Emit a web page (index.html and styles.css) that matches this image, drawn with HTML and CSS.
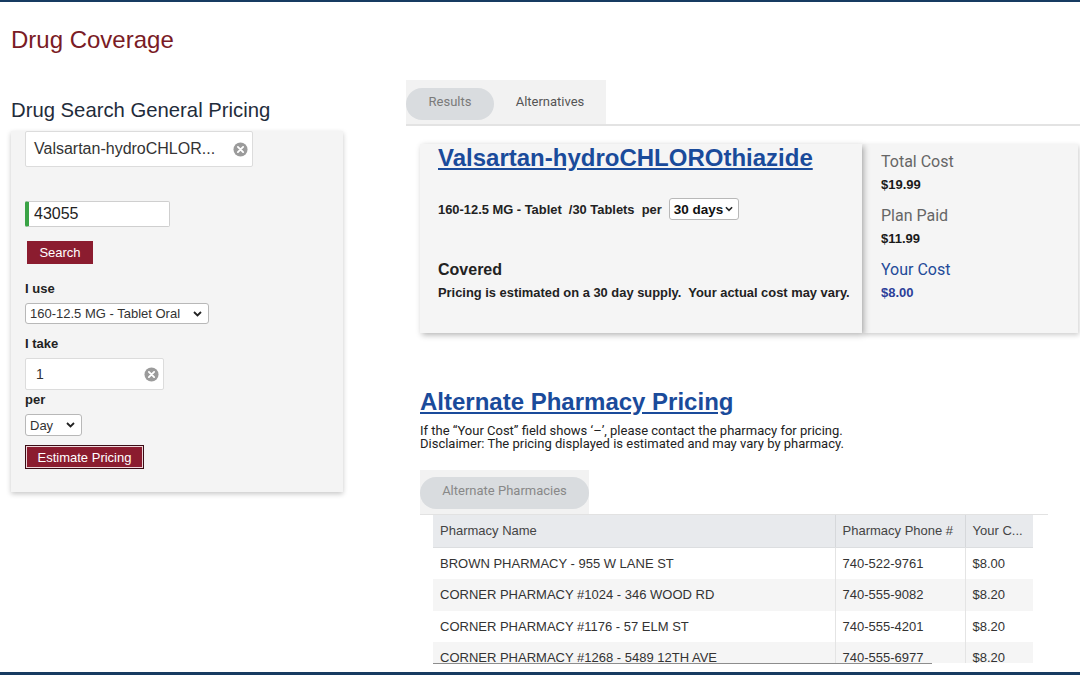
FILE: index.html
```html
<!DOCTYPE html>
<html>
<head>
<meta charset="utf-8">
<title>Drug Coverage</title>
<link rel="stylesheet" href="styles.css">
</head>
<body>
<div class="frame">
  <h1 class="page-title">Drug Coverage</h1>
  <div class="columns">
    <section class="left">
      <h2 class="search-title">Drug Search General Pricing</h2>
      <div class="search-card">
        <div class="field field-drug">
          <span>Valsartan-hydroCHLOR...</span>
          <svg class="clear" width="15" height="15" viewBox="0 0 16 16"><circle cx="8" cy="8" r="7.5" fill="#9b9b9b"/><path d="M5.2 5.2l5.6 5.6M10.8 5.2l-5.6 5.6" stroke="#fff" stroke-width="2" stroke-linecap="round"/></svg>
        </div>
        <div class="field field-zip"><span>43055</span></div>
        <button class="btn btn-search">Search</button>
        <div class="label label-use">I use</div>
        <div class="select select-use">
          <span>160-12.5 MG - Tablet Oral</span>
          <svg width="9" height="6" viewBox="0 0 9 6"><path d="M1 1l3.5 3.5L8 1" fill="none" stroke="#222" stroke-width="1.8"/></svg>
        </div>
        <div class="label label-take">I take</div>
        <div class="field field-qty">
          <span>1</span>
          <svg class="clear" width="15" height="15" viewBox="0 0 16 16"><circle cx="8" cy="8" r="7.5" fill="#9b9b9b"/><path d="M5.2 5.2l5.6 5.6M10.8 5.2l-5.6 5.6" stroke="#fff" stroke-width="2" stroke-linecap="round"/></svg>
        </div>
        <div class="label label-per">per</div>
        <div class="select select-per">
          <span>Day</span>
          <svg width="9" height="6" viewBox="0 0 9 6"><path d="M1 1l3.5 3.5L8 1" fill="none" stroke="#222" stroke-width="1.8"/></svg>
        </div>
        <button class="btn btn-estimate">Estimate Pricing</button>
      </div>
    </section>

    <section class="right">
      <div class="tabs">
        <div class="tab tab-results">Results</div>
        <div class="tab tab-alternatives">Alternatives</div>
      </div>
      <div class="tabs-rule"></div>

      <div class="result-row">
        <div class="drug-card">
          <a class="drug-name">Valsartan-hydroCHLOROthiazide</a>
          <div class="dose-row">
            <span>160-12.5 MG - Tablet&nbsp; /30 Tablets&nbsp; per</span>
            <div class="select select-days">
              <span>30 days</span>
              <svg width="8" height="6" viewBox="0 0 9 6"><path d="M1 1l3.5 3.5L8 1" fill="none" stroke="#222" stroke-width="1.8"/></svg>
            </div>
          </div>
          <div class="covered">Covered</div>
          <div class="note">Pricing is estimated on a 30 day supply.&nbsp; Your actual cost may vary.</div>
        </div>
        <div class="cost-card">
          <div class="cost-item">
            <div class="cost-label">Total Cost</div>
            <div class="cost-value">$19.99</div>
          </div>
          <div class="cost-item">
            <div class="cost-label">Plan Paid</div>
            <div class="cost-value">$11.99</div>
          </div>
          <div class="cost-item cost-yours">
            <div class="cost-label">Your Cost</div>
            <div class="cost-value">$8.00</div>
          </div>
        </div>
      </div>

      <h3 class="alt-title"><a>Alternate Pharmacy Pricing</a></h3>
      <p class="disclaimer">If the “Your Cost” field shows ‘–’, please contact the pharmacy for pricing.<br>Disclaimer: The pricing displayed is estimated and may vary by pharmacy.</p>

      <div class="tabs tabs-alt">
        <div class="tab tab-alt-pharm">Alternate Pharmacies</div>
      </div>
      <div class="alt-rule"></div>

      <div class="table-scroll">
        <table class="pharm-table">
          <colgroup><col class="c-name"><col class="c-phone"><col class="c-cost"></colgroup>
          <thead>
            <tr><th>Pharmacy Name</th><th>Pharmacy Phone #</th><th>Your C...</th></tr>
          </thead>
          <tbody>
            <tr><td>BROWN PHARMACY - 955 W LANE ST</td><td>740-522-9761</td><td>$8.00</td></tr>
            <tr><td>CORNER PHARMACY #1024 - 346 WOOD RD</td><td>740-555-9082</td><td>$8.20</td></tr>
            <tr><td>CORNER PHARMACY #1176 - 57 ELM ST</td><td>740-555-4201</td><td>$8.20</td></tr>
            <tr><td>CORNER PHARMACY #1268 - 5489 12TH AVE</td><td>740-555-6977</td><td>$8.20</td></tr>
          </tbody>
        </table>
      </div>
      <div class="scroll-thumb"></div>
    </section>
  </div>
</div>
</body>
</html>
```

FILE: styles.css
```css
html, body {
  margin: 0;
  padding: 0;
  background: #fff;
}

.frame {
  width: 1080px;
  height: 675px;
  box-sizing: border-box;
  border-top: 2px solid #173b61;
  border-bottom: 3px solid #173b61;
  overflow: hidden;
  font-family: "Liberation Sans", Arial, sans-serif;
  color: #222;
}

.page-title {
  margin: 24px 0 0 11px;
  font-size: 24px;
  line-height: 28px;
  font-weight: normal;
  color: #7a1b25;
}

.columns {
  display: flex;
  padding-left: 11px;
  gap: 63px;
}

/* ---------- left column ---------- */
.left {
  width: 332px;
  flex: none;
}

.search-title {
  margin: 44px 0 0;
  font-size: 20.3px;
  line-height: 24px;
  font-weight: normal;
  color: #1f2c3b;
}

.search-card {
  margin-top: 9px;
  background: #f4f4f4;
  box-shadow: 0 2px 5px rgba(0, 0, 0, 0.22);
  padding: 0 14px 23px;
}

.field {
  box-sizing: border-box;
  background: #fff;
  border: 1px solid #dcdcdc;
  border-radius: 2px;
  display: flex;
  align-items: center;
  justify-content: space-between;
  color: #333;
}

.field-drug {
  width: 228px;
  height: 36px;
  padding: 0 4px 0 8px;
  font-size: 16px;
}

.field-zip {
  margin-top: 34px;
  width: 145px;
  height: 26px;
  border-color: #cfcfcf;
  border-left: 4px solid #3aa346;
  padding-left: 5px;
  font-size: 16px;
  color: #222;
}

.field-qty {
  margin-top: 6px;
  width: 139px;
  height: 32px;
  padding: 0 4px 0 10px;
  font-size: 14px;
}

.clear {
  flex: none;
  display: block;
}

.btn {
  display: block;
  border: none;
  padding: 0;
  font-family: "Liberation Sans", Arial, sans-serif;
  font-size: 13px;
  color: #fff;
  background: #8b1c2f;
}

.btn-search {
  margin: 14px 0 0 2px;
  width: 66px;
  height: 23px;
}

.btn-estimate {
  margin-top: 9px;
  width: 119px;
  height: 24px;
  border: 1px solid #3a0d16;
  box-shadow: inset 0 0 0 1px #efd6da;
}

.label {
  font-size: 13px;
  line-height: 16px;
  font-weight: bold;
  color: #222;
}

.label-use { margin-top: 17px; }
.label-take { margin-top: 12px; }
.label-per { margin-top: 2px; }

.select {
  box-sizing: border-box;
  display: flex;
  align-items: center;
  justify-content: space-between;
  background: #fff;
  border: 1px solid #b8b8b8;
  border-radius: 3px;
  font-size: 13px;
  color: #333;
  padding: 0 6px 0 4px;
}

.select svg {
  flex: none;
  display: block;
}

.select-use {
  margin-top: 6px;
  width: 184px;
  height: 21px;
}

.select-per {
  margin-top: 6px;
  width: 57px;
  height: 22px;
}

/* ---------- right column ---------- */
.right {
  width: 674px;
  flex: none;
  margin-top: 26px;
}

.tabs {
  display: flex;
  width: 200px;
  height: 44px;
  box-sizing: border-box;
  padding-top: 8px;
  background: #f2f2f2;
}

.tab {
  height: 32px;
  box-sizing: border-box;
  padding-bottom: 5px;
  display: flex;
  align-items: center;
  justify-content: center;
  border-radius: 16px;
  font-family: Roboto, "Liberation Sans", sans-serif;
  font-size: 13px;
  color: #555;
}

.tab-results {
  width: 88px;
  background: #d9dcdf;
  color: #7a7a7a;
}

.tab-alternatives {
  width: 112px;
}

.tabs-rule {
  height: 2px;
  background: #e3e3e3;
}

.result-row {
  display: flex;
  gap: 1px;
  margin: 18px 0 0 14px;
  height: 189px;
}

.drug-card {
  position: relative;
  z-index: 1;
  width: 442px;
  box-sizing: border-box;
  padding-left: 18px;
  background: #f5f5f5;
  box-shadow: 2px 2px 6px rgba(0, 0, 0, 0.3);
}

.drug-name {
  display: block;
  font-size: 24px;
  line-height: 28px;
  font-weight: bold;
  color: #1a4b9b;
  text-decoration: underline;
}

.dose-row {
  margin-top: 26px;
  height: 22px;
  display: flex;
  align-items: center;
  font-size: 12.9px;
  font-weight: bold;
  color: #222;
}

.select-days {
  margin-left: 7px;
  width: 70px;
  height: 22px;
  font-size: 13.5px;
  color: #111;
  padding: 0 5px 0 4px;
}

.covered {
  margin-top: 40px;
  font-size: 16px;
  line-height: 20px;
  font-weight: bold;
  color: #222;
}

.note {
  margin-top: 6px;
  font-size: 12.9px;
  line-height: 14px;
  font-weight: bold;
  color: #222;
}

.cost-card {
  width: 215px;
  box-sizing: border-box;
  padding: 8px 0 0 18px;
  background: #f5f5f5;
  box-shadow: 1px 2px 5px rgba(0, 0, 0, 0.2);
}

.cost-item + .cost-item {
  margin-top: 14px;
}

.cost-label {
  font-family: Roboto, "Liberation Sans", sans-serif;
  font-size: 16px;
  line-height: 20px;
  color: #666;
}

.cost-value {
  margin-top: 6px;
  font-size: 13px;
  line-height: 14px;
  font-weight: bold;
  color: #1a1a1a;
}

.cost-yours .cost-label { color: #1f4b99; }
.cost-yours .cost-value { color: #2c3f99; }

.alt-title {
  margin: 55px 0 0 14px;
  font-size: 24px;
  line-height: 28px;
  font-weight: bold;
}

.alt-title a {
  color: #1a4b9b;
  text-decoration: underline;
}

.disclaimer {
  margin: 8px 0 0 14px;
  font-family: Roboto, "Liberation Sans", sans-serif;
  font-size: 13px;
  line-height: 13px;
  color: #222;
}

.tabs-alt {
  margin: 20px 0 0 14px;
  width: 169px;
  padding-top: 7px;
}

.tab-alt-pharm {
  width: 169px;
  background: #d9dcdf;
  color: #888;
}

.alt-rule {
  margin-left: 14px;
  width: 628px;
  height: 1px;
  background: #e2e2e2;
}

.table-scroll {
  margin-left: 27px;
  width: 615px;
  height: 148px;
  overflow: hidden;
}

.pharm-table {
  width: 600px;
  table-layout: fixed;
  border-collapse: collapse;
  font-size: 13px;
}

.c-name { width: 402px; }
.c-phone { width: 130px; }
.c-cost { width: 68px; }

.pharm-table th {
  height: 30px;
  padding: 0 7px 2px;
  background: #e8eaed;
  text-align: left;
  font-weight: normal;
  color: #444;
  border-right: 1px solid #d6d8db;
  border-bottom: 1px solid #dcdee0;
  white-space: nowrap;
  overflow: hidden;
}

.pharm-table td {
  height: 31.3px;
  padding: 0 7px;
  color: #333;
  border-right: 1px solid #e4e4e4;
  white-space: nowrap;
}

.pharm-table th:last-child,
.pharm-table td:last-child {
  border-right: none;
}

.pharm-table tbody tr:nth-child(even) td {
  background: #f5f5f5;
}

.scroll-thumb {
  margin-left: 27px;
  width: 499px;
  height: 1px;
  background: #8d8d8d;
}
```
